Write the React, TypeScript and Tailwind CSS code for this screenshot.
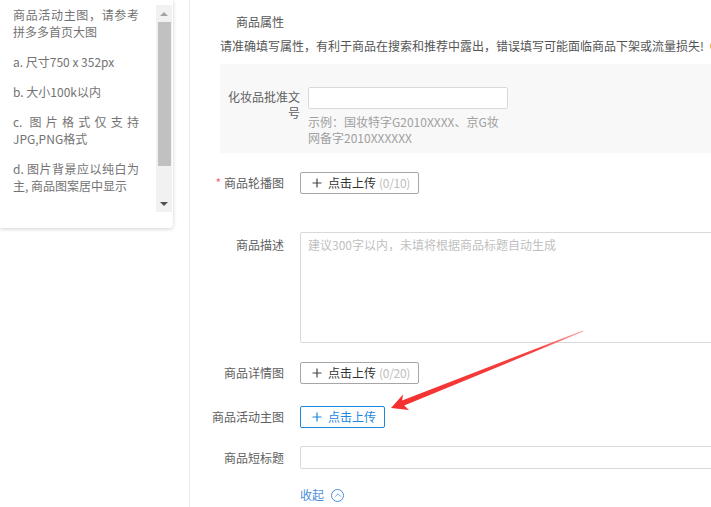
import { ChevronUp } from 'lucide-react'

const font = { fontFamily: '"Noto Sans CJK SC", "Noto Sans", sans-serif' }

function Plus({ color = '#333' }: { color?: string }) {
  return (
    <svg width="10" height="10" viewBox="0 0 10 10" className="shrink-0">
      <path d="M5 0.5V9.5M0.5 5H9.5" stroke={color} strokeWidth="1.2" />
    </svg>
  )
}

function UploadButton({ count, active }: { count?: string; active?: boolean }) {
  return (
    <button
      className={`h-[22px] flex items-center pl-[11px] pr-[8px] rounded-[2px] border bg-white leading-[16px] ${
        active ? 'border-[#1a88e0] text-[#1a88e0]' : 'border-[#a6a6a6] text-[#333]'
      }`}
    >
      <Plus color={active ? '#1a88e0' : '#444'} />
      <span className="ml-[6px]">点击上传</span>
      {count && <span className="ml-[3px] text-[#bdbdbd] tracking-[-0.3px]">{count}</span>}
    </button>
  )
}

function Row({
  label,
  required,
  top,
  children,
}: {
  label: string
  required?: boolean
  top?: boolean
  children: React.ReactNode
}) {
  return (
    <div className={`flex ${top ? 'items-start' : 'items-center'}`}>
      <div className={`w-[94px] shrink-0 text-right text-[#606060] leading-[16px] ${top ? 'pt-[5px]' : ''}`}>
        {required && <span className="text-[#f56c6c] mr-[3px]">*</span>}
        {label}
      </div>
      <div className="ml-[16px]">{children}</div>
    </div>
  )
}

function HelpCard() {
  return (
    <div className="w-[173px] h-[228px] bg-white rounded-br-[4px] shadow-[0_1px_4px_rgba(0,0,0,0.18)] flex pt-[5px] pb-[16px]">
      <div className="flex-1 overflow-hidden pl-[13px] pt-[1px] text-[#737373] leading-[17px]">
        <div className="w-[126px] flex flex-col gap-[13px] text-justify">
          <p>商品活动主图，请参考拼多多首页大图</p>
          <p>a. 尺寸750 x 352px</p>
          <p>b. 大小100k以内</p>
          <p>c. 图片格式仅支持JPG,PNG格式</p>
          <p>d. 图片背景应以纯白为主, 商品图案居中显示</p>
        </div>
      </div>
      <div className="w-[16px] mr-[1px] bg-[#f1f1f1] flex flex-col items-center">
        <div className="h-[17px] flex items-center justify-center">
          <div className="w-0 h-0 border-x-[4px] border-x-transparent border-b-[4px] border-b-[#a3a3a3]" />
        </div>
        <div className="w-[13px] h-[144px] bg-[#c1c1c1]" />
        <div className="flex-1" />
        <div className="h-[17px] flex items-center justify-center">
          <div className="w-0 h-0 border-x-[4px] border-x-transparent border-t-[4px] border-t-[#505050]" />
        </div>
      </div>
    </div>
  )
}

function Arrow() {
  return (
    <svg className="absolute inset-0 pointer-events-none" width="711" height="507" viewBox="0 0 711 507">
      <defs>
        <linearGradient id="ar" x1="391" y1="408" x2="584" y2="331" gradientUnits="userSpaceOnUse">
          <stop offset="0" stopColor="#f52f2f" />
          <stop offset="0.75" stopColor="#f44141" />
          <stop offset="1" stopColor="#f8b0b0" />
        </linearGradient>
      </defs>
      <polygon
        points="391,408 409,410 404.2,405.6 583.3,331.6 582.8,330.4 402.1,400.6 403,394.4"
        fill="url(#ar)"
      />
    </svg>
  )
}

export default function App() {
  return (
    <div
      className="relative w-[711px] h-[507px] overflow-hidden bg-white flex text-[12px]"
      style={font}
    >
      <div className="w-[190px] shrink-0 border-r border-[#ebebeb]">
        <HelpCard />
      </div>

      <main className="flex-1 flex flex-col overflow-hidden">
        <h3 className="mt-[14px] pl-[46px] leading-[16px] font-normal text-[#555]">商品属性</h3>
        <div className="mt-[8px] pl-[30px] leading-[16px] text-[#555] whitespace-nowrap flex items-center">
          请准确填写属性，有利于商品在搜索和推荐中露出，错误填写可能面临商品下架或流量损失!
          <span className="ml-[6px] w-[12px] h-[12px] rounded-full bg-[#f5b841] shrink-0" />
        </div>

        <div className="mt-[10px] ml-[30px] w-[600px] h-[89px] shrink-0 bg-[#f8f8f8] pl-[8px] pt-[23px] flex items-start">
          <div className="w-[72px] shrink-0 text-right text-[#606060] leading-[16px] pt-[2px]">
            化妆品批准文号
          </div>
          <div className="ml-[8px]">
            <input className="w-[200px] h-[22px] rounded-[2px] border border-[#d9d9d9] bg-white outline-none" />
            <p className="w-[196px] mt-[5px] text-[#a0a0a0] leading-[16px]">
              示例：国妆特字G2010XXXX、京G妆网备字2010XXXXXX
            </p>
          </div>
        </div>

        <div className="mt-[19px]">
          <Row label="商品轮播图" required>
            <UploadButton count="(0/10)" />
          </Row>
        </div>

        <div className="mt-[38px]">
          <Row label="商品描述" top>
            <textarea
              className="block w-[500px] h-[111px] resize-none rounded-[2px] border border-[#d9d9d9] px-[7px] pt-[4px] leading-[16px] outline-none placeholder:text-[#bfbfbf]"
              placeholder="建议300字以内，未填将根据商品标题自动生成"
            />
          </Row>
        </div>

        <div className="mt-[19px]">
          <Row label="商品详情图">
            <UploadButton count="(0/20)" />
          </Row>
        </div>

        <div className="mt-[22px]">
          <Row label="商品活动主图">
            <UploadButton active />
          </Row>
        </div>

        <div className="mt-[18px]">
          <Row label="商品短标题">
            <input className="block w-[500px] h-[23px] rounded-[2px] border border-[#d9d9d9] outline-none" />
          </Row>
        </div>

        <div className="mt-[18px] pl-[110px] flex items-center leading-[16px] text-[#4a8fdb]">
          <span>收起</span>
          <span className="ml-[7px] w-[13px] h-[13px] rounded-full border border-[#4a8fdb] flex items-center justify-center">
            <ChevronUp size={10} strokeWidth={2} />
          </span>
        </div>
      </main>

      <Arrow />
    </div>
  )
}
